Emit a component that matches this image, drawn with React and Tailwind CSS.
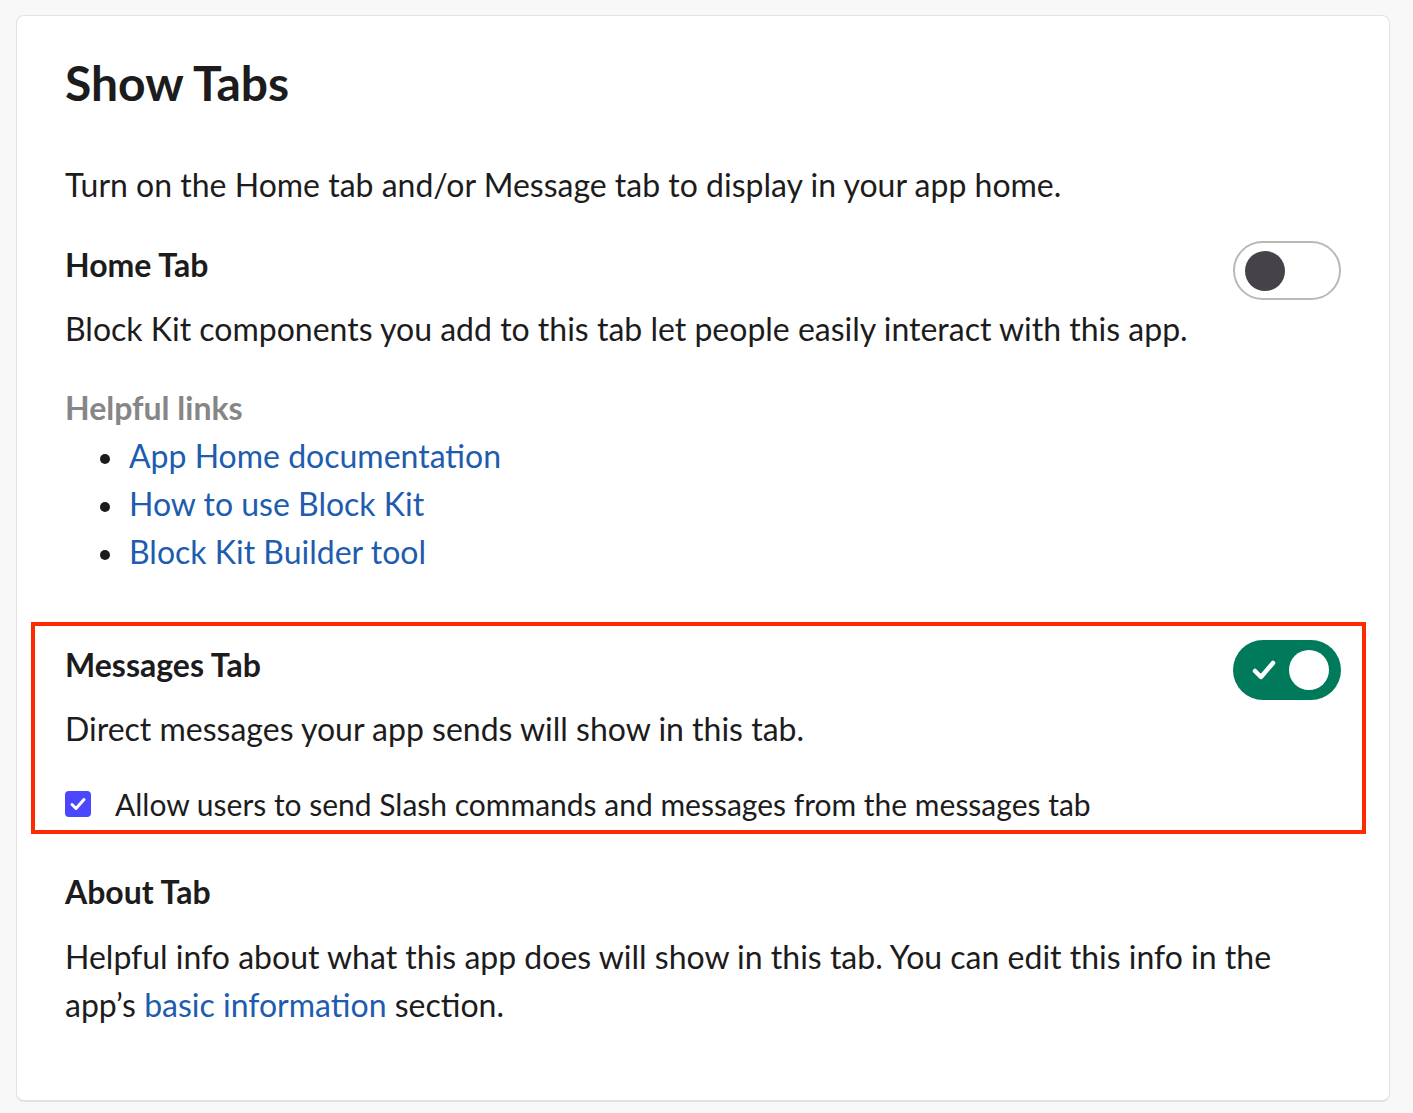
import React from "react";

function Toggle({ on }) {
  if (on) {
    return (
      <div className="relative w-[108px] h-[60px] rounded-full bg-[#007a5a] shrink-0">
        <svg className="absolute left-[18px] top-[18px]" width="26" height="24" viewBox="0 0 26 24">
          <path d="M4 13 L10 19 L22 5" fill="none" stroke="#fff" strokeWidth="4.5" strokeLinecap="round" strokeLinejoin="round" />
        </svg>
        <div className="absolute right-[12px] top-[10px] w-[40px] h-[40px] rounded-full bg-white" />
      </div>
    );
  }
  return (
    <div className="relative w-[108px] h-[59px] rounded-full border-2 border-[#b9b9b9] bg-white shrink-0 -mt-[1px]">
      <div className="absolute left-[10px] top-[7.5px] w-[40px] h-[40px] rounded-full bg-[#454249]" />
    </div>
  );
}

function Bullet({ children }) {
  return (
    <li className="flex items-center leading-[48px]">
      <span className="w-[10px] h-[10px] rounded-full bg-[#1d1c1d] mt-[6px] ml-[35px] mr-[19px] shrink-0" />
      <a className="text-[#1d5cae]">{children}</a>
    </li>
  );
}

export default function App() {
  return (
    <div
      className="min-h-[1113px] bg-[#f8f8f8] pt-[15px] pb-[11px] pl-[16px] pr-[23px] text-[#1d1c1d]"
      style={{ fontFamily: "Lato, 'Noto Sans', sans-serif" }}
    >
      <div className="bg-white border border-[#e2e2e2] border-b-2 rounded-[8px] pl-[48px] pr-[48px] pt-[39px] pb-[71px]">
        <h1 className="text-[48px] leading-[56px] font-bold">Show Tabs</h1>

        <p className="text-[32px] leading-[48px] mt-[50px]">
          Turn on the Home tab and/or Message tab to display in your app home.
        </p>

        <div className="flex justify-between items-start mt-[33px]">
          <h2 className="text-[32px] leading-[40px] font-bold mt-[3px]">Home Tab</h2>
          <Toggle on={false} />
        </div>
        <p className="text-[32px] leading-[48px] mt-[5px]">
          Block Kit components you add to this tab let people easily interact with this app.
        </p>

        <h3 className="text-[32px] leading-[48px] font-bold text-[#868686] mt-[31px]">Helpful links</h3>
        <ul className="text-[32px]">
          <Bullet>App Home documentation</Bullet>
          <Bullet>How to use Block Kit</Bullet>
          <Bullet>Block Kit Builder tool</Bullet>
        </ul>

        <div className="mt-[46px] -ml-[34px] -mr-[25px] border-4 border-[#ff2a00] pl-[30px] pr-[21px] pt-[14px] pb-[2px]">
          <div className="flex justify-between items-start">
            <h2 className="text-[32px] leading-[40px] font-bold mt-[5px]">Messages Tab</h2>
            <Toggle on={true} />
          </div>
          <p className="text-[32px] leading-[48px] mt-[5px]">
            Direct messages your app sends will show in this tab.
          </p>
          <div className="flex items-center mt-[27px]">
            <div className="w-[26px] h-[26px] rounded-[4px] bg-[#4a47ff] flex items-center justify-center shrink-0">
              <svg width="18" height="16" viewBox="0 0 18 16">
                <path d="M3 8.5 L7 12.5 L15 3.5" fill="none" stroke="#fff" strokeWidth="3" strokeLinecap="round" strokeLinejoin="round" />
              </svg>
            </div>
            <span className="text-[30px] leading-[48px] ml-[24px]">
              Allow users to send Slash commands and messages from the messages tab
            </span>
          </div>
        </div>

        <h2 className="text-[32px] leading-[40px] font-bold mt-[38px]">About Tab</h2>
        <p className="text-[32px] leading-[48px] mt-[21px]">
          Helpful info about what this app does will show in this tab. You can edit this info in the
          <br />
          app’s <a className="text-[#1d5cae]">basic information</a> section.
        </p>
      </div>
    </div>
  );
}
